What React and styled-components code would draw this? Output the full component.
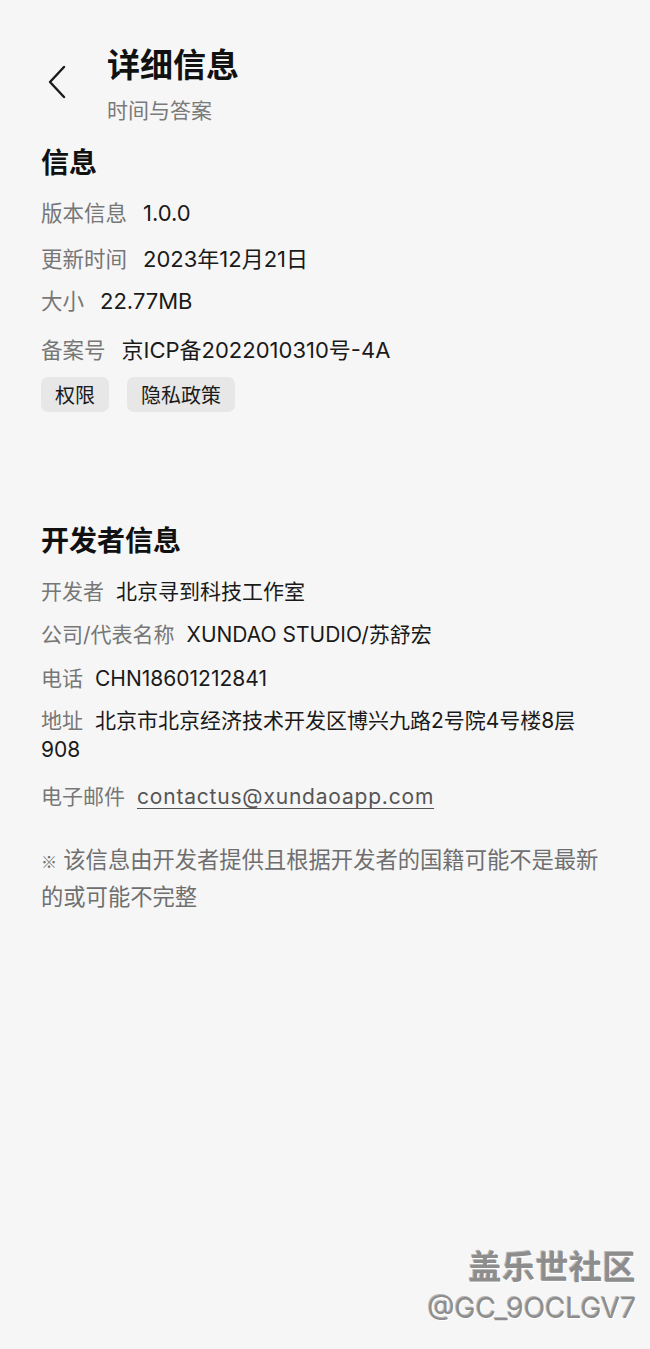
import React from "react";
import styled, { createGlobalStyle } from "styled-components";

const GlobalStyle = createGlobalStyle`
  html, body {
    margin: 0;
    padding: 0;
    background: #f6f6f6;
  }
  body {
    font-family: Inter, "Noto Sans CJK SC", sans-serif;
    color: #1a1a1a;
  }
`;

const appInfo = [
  { label: "版本信息", value: "1.0.0", top: 17 },
  { label: "更新时间", value: "2023年12月21日", top: 16 },
  { label: "大小", value: "22.77MB", top: 12 },
  { label: "备案号", value: "京ICP备2022010310号-4A", top: 19 },
];

const devInfo = [
  { label: "开发者", value: "北京寻到科技工作室", top: 18 },
  { label: "公司/代表名称", value: "XUNDAO STUDIO/苏舒宏", top: 14 },
  { label: "电话", value: "CHN18601212841", top: 15 },
  { label: "地址", value: "北京市北京经济技术开发区博兴九路2号院4号楼8层 908", top: 13 },
  { label: "电子邮件", value: "contactus@xundaoapp.com", top: 18, link: true },
];

export default function App() {
  return (
    <Page>
      <GlobalStyle />
      <Header>
        <BackButton aria-label="返回">
          <svg width="20" height="34" viewBox="0 0 20 34" fill="none">
            <path
              d="M17 2 L3 17 L17 32"
              stroke="#1a1a1a"
              strokeWidth="2.4"
              strokeLinecap="round"
              strokeLinejoin="round"
            />
          </svg>
        </BackButton>
        <TitleBlock>
          <Title>详细信息</Title>
          <Subtitle>时间与答案</Subtitle>
        </TitleBlock>
      </Header>

      <Section>
        <SectionTitle>信息</SectionTitle>
        {appInfo.map((row) => (
          <InfoRow key={row.label} $top={row.top} $big>
            <Label $big>{row.label}</Label>
            <Value>{row.value}</Value>
          </InfoRow>
        ))}
        <Chips>
          <Chip>权限</Chip>
          <Chip>隐私政策</Chip>
        </Chips>
      </Section>

      <Section $gap={111}>
        <SectionTitle>开发者信息</SectionTitle>
        {devInfo.map((row) => (
          <InfoRow key={row.label} $top={row.top}>
            <Label>{row.label}</Label>
            {row.link ? <Email>{row.value}</Email> : <Value>{row.value}</Value>}
          </InfoRow>
        ))}
        <Note>
          <Mark>※</Mark> 该信息由开发者提供且根据开发者的国籍可能不是最新的或可能不完整
        </Note>
      </Section>

      <Watermark>
        <WatermarkTitle>盖乐世社区</WatermarkTitle>
        <WatermarkId>@GC_9OCLGV7</WatermarkId>
      </Watermark>
    </Page>
  );
}

const Page = styled.div`
  position: relative;
  min-height: 1349px;
  box-sizing: border-box;
  padding: 44px 41px 0 41px;
`;

const Header = styled.header`
  display: flex;
  align-items: flex-start;
`;

const BackButton = styled.button`
  border: none;
  background: none;
  padding: 0;
  margin: 21px 0 0 6px;
  width: 60px;
  display: flex;
  justify-content: flex-start;
  cursor: pointer;
`;

const TitleBlock = styled.div`
  display: flex;
  flex-direction: column;
  gap: 11px;
`;

const Title = styled.h1`
  margin: 0;
  font-size: 33px;
  line-height: 42px;
  font-weight: 700;
  color: #111;
`;

const Subtitle = styled.div`
  font-size: 21px;
  line-height: 28px;
  color: #7a7a7a;
`;

const Section = styled.section`
  margin-top: ${(p) => p.$gap || 20}px;
`;

const SectionTitle = styled.h2`
  margin: 0;
  font-size: 28px;
  line-height: 36px;
  font-weight: 700;
  color: #111;
`;

const InfoRow = styled.p`
  margin: ${(p) => p.$top}px 0 0 0;
  font-size: ${(p) => (p.$big ? 22 : 21)}px;
  line-height: ${(p) => (p.$big ? 30 : 29)}px;
  width: 562px;
`;

const Label = styled.span`
  font-size: ${(p) => (p.$big ? 21.5 : 21)}px;
  color: #777;
  margin-right: ${(p) => (p.$big ? 16 : 12)}px;
`;

const Value = styled.span`
  color: #1a1a1a;
`;

const Email = styled.a`
  color: #555;
  letter-spacing: 0.8px;
  text-decoration: underline;
  text-underline-offset: 4px;
  text-decoration-thickness: 1px;
`;

const Chips = styled.div`
  display: flex;
  gap: 18px;
  margin-top: 12px;
`;

const Chip = styled.button`
  border: none;
  background: #e7e7e7;
  border-radius: 7px;
  height: 35px;
  padding: 0 14px;
  font-family: inherit;
  font-size: 20px;
  color: #1a1a1a;
`;

const Note = styled.p`
  margin: 30px 0 0 0;
  width: 568px;
  font-size: 22.3px;
  line-height: 37px;
  color: #6f6f6f;
`;

const Mark = styled.span`
  font-family: "Noto Sans CJK SC", sans-serif;
  font-size: 16px;
  line-height: 1;
`;

const Watermark = styled.div`
  position: absolute;
  right: 14px;
  bottom: 22px;
  display: flex;
  flex-direction: column;
  align-items: flex-end;
  color: #8d8d8d;
  text-shadow: 1px 1px 0 #ffffff, -1px -1px 0 #b8b8b8;
`;

const WatermarkTitle = styled.div`
  font-size: 33px;
  line-height: 44px;
  font-weight: 700;
  letter-spacing: 0.5px;
`;

const WatermarkId = styled.div`
  font-size: 28px;
  line-height: 38px;
`;
